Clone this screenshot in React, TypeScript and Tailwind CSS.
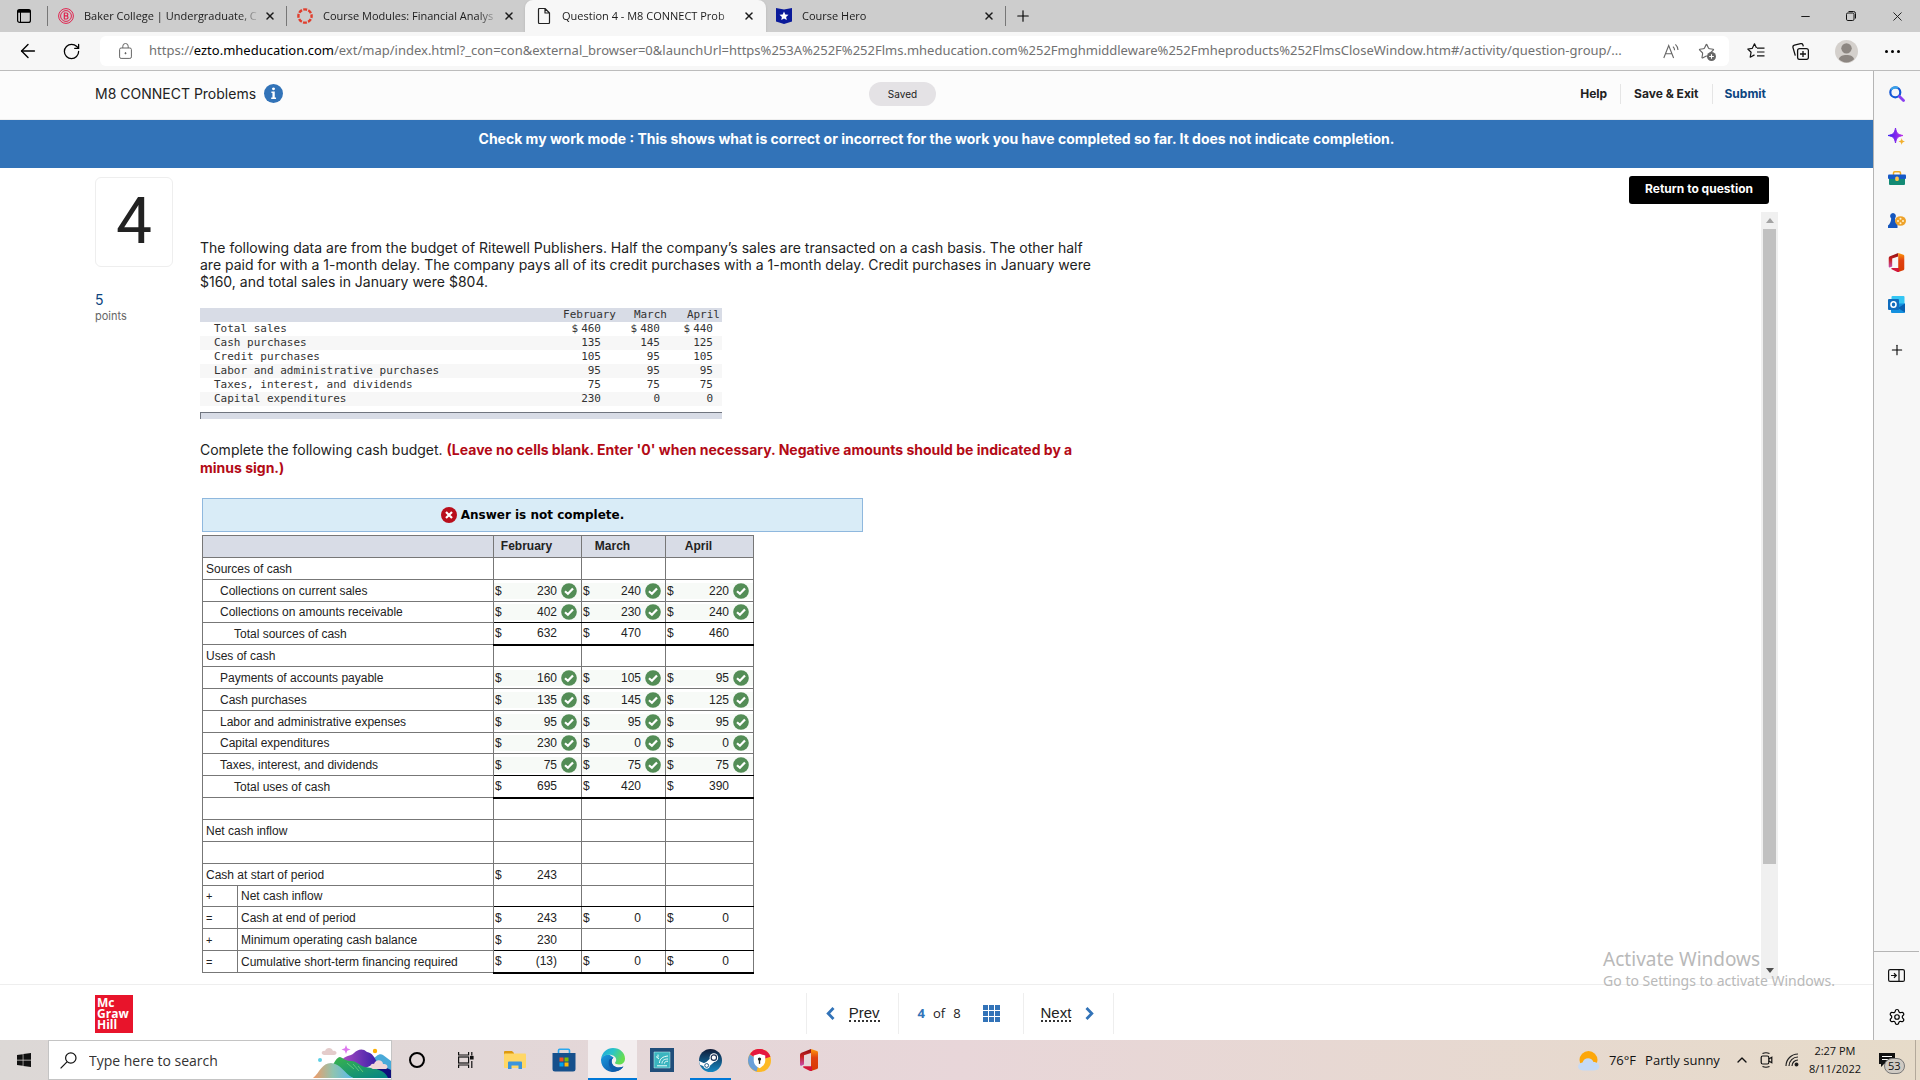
import type { ReactNode } from "react";
import { ArrowLeft, RotateCw, Settings, Star, X, Plus, Minus, ChevronUp } from "lucide-react";
import { FaWindows } from "react-icons/fa";

const tabs = [
  { title: "Baker College | Undergraduate, C", icon: <BakerIcon />, state: "idle" },
  { title: "Course Modules: Financial Analys", icon: <CanvasIcon />, state: "idle" },
  { title: "Question 4 - M8 CONNECT Prob", icon: <PageIcon />, state: "active" },
  { title: "Course Hero", icon: <HeroIcon />, state: "last" },
];

const budget = [
  ["Total sales", "460", "480", "440"],
  ["Cash purchases", "135", "145", "125"],
  ["Credit purchases", "105", "95", "105"],
  ["Labor and administrative purchases", "95", "95", "95"],
  ["Taxes, interest, and dividends", "75", "75", "75"],
  ["Capital expenditures", "230", "0", "0"],
];

type Row = {
  label: string;
  values?: string[];
  indent?: 1 | 2;
  op?: string;
  ok?: boolean;
  total?: boolean;
  tight?: boolean;
  subline?: boolean;
};

const rows: Row[] = [
  { label: "Sources of cash" },
  { label: "Collections on current sales", indent: 1, ok: true, values: ["230", "240", "220"] },
  { label: "Collections on amounts receivable", indent: 1, ok: true, tight: true, subline: true, values: ["402", "230", "240"] },
  { label: "Total sources of cash", indent: 2, total: true, values: ["632", "470", "460"] },
  { label: "Uses of cash" },
  { label: "Payments of accounts payable", indent: 1, ok: true, values: ["160", "105", "95"] },
  { label: "Cash purchases", indent: 1, ok: true, values: ["135", "145", "125"] },
  { label: "Labor and administrative expenses", indent: 1, ok: true, values: ["95", "95", "95"] },
  { label: "Capital expenditures", indent: 1, ok: true, tight: true, values: ["230", "0", "0"] },
  { label: "Taxes, interest, and dividends", indent: 1, ok: true, subline: true, values: ["75", "75", "75"] },
  { label: "Total uses of cash", indent: 2, total: true, values: ["695", "420", "390"] },
  { label: "" },
  { label: "Net cash inflow" },
  { label: "" },
  { label: "Cash at start of period", values: ["243", "", ""] },
  { label: "Net cash inflow", op: "+", tight: true, subline: true },
  { label: "Cash at end of period", op: "=", values: ["243", "0", "0"] },
  { label: "Minimum operating cash balance", op: "+", subline: true, values: ["230", "", ""] },
  { label: "Cumulative short-term financing required", op: "=", total: true, values: ["(13)", "0", "0"] },
];

function BakerIcon() {
  return (
    <svg viewBox="0 0 16 16" className="size-4" fill="none" stroke="#e0224e">
      <circle cx="8" cy="8" r="7.4" strokeWidth="1" />
      <circle cx="8" cy="8" r="5.4" strokeWidth="1" />
      <path d="M6.3 4.8v6.4M6 5h2.4a1.4 1.4 0 0 1 0 2.9H6.5M8.5 8a1.5 1.5 0 0 1 0 3H6" strokeWidth="1.2" />
    </svg>
  );
}

function CanvasIcon() {
  return (
    <svg viewBox="0 0 16 16" className="size-4" fill="none" stroke="#e03e2d">
      <circle cx="8" cy="8" r="6.6" strokeWidth="2.4" strokeDasharray="3.9 1.28" strokeDashoffset="1.95" />
    </svg>
  );
}

function PageIcon() {
  return (
    <svg viewBox="0 0 16 16" className="size-4" fill="none" stroke="#222" strokeWidth="1.2" strokeLinejoin="round">
      <path d="M2.5 1.5a1 1 0 0 1 1-1H9l4.5 4.5v9.5a1 1 0 0 1-1 1h-9a1 1 0 0 1-1-1zM9 .5V5h4.5" />
    </svg>
  );
}

function HeroIcon() {
  return (
    <svg viewBox="0 0 16 16" className="size-4">
      <path d="M0 0l8 1.6L16 0v13.4L8 16l-8-2.6z" fill="#0a1a9a" />
      <path d="M8 3.6l1.3 2.9 3.2.3-2.4 2.1.7 3.1L8 10.4 5.2 12l.7-3.1-2.4-2.1 3.2-.3z" fill="#fff" />
    </svg>
  );
}

function OfficeIcon({ className }: { className: string }) {
  return (
    <svg viewBox="0 0 18 22" className={className}>
      <defs>
        <linearGradient id="officeRed" x1="0" y1="0" x2="0" y2="1">
          <stop offset="0" stopColor="#8c0f14" />
          <stop offset=".45" stopColor="#c9211f" />
          <stop offset="1" stopColor="#c64fb0" />
        </linearGradient>
        <linearGradient id="officeOrange" x1="0" y1="0" x2="0" y2="1">
          <stop offset="0" stopColor="#ff9a0a" />
          <stop offset=".4" stopColor="#e04010" />
          <stop offset="1" stopColor="#d83b01" />
        </linearGradient>
      </defs>
      <path d="M11 0L1.5 3.8C.6 4.2 0 5 0 6v9.5c0 1 1 1.6 1.900 1.100L4 15.5V6.3L11 4z" fill="url(#officeRed)" />
      <path d="M11 0l6 2c.7.3 1 .8 1 1.5v15c0 .7-.3 1.2-1 1.5l-6 2z" fill="url(#officeOrange)" />
      <path d="M3.5 17.3H12V22L10 21.9l-6-2.8c-1-.5-1.3-1.4-.5-1.8z" fill="#d3173a" />
    </svg>
  );
}

function CheckDot() {
  return (
    <svg viewBox="0 0 16 16" className="size-4 shrink-0" role="img" aria-label="Correct">
      <circle cx="8" cy="8" r="7.8" fill="#538d56" />
      <path d="M4 8.2l2.900 2.600L12 5.400" fill="none" stroke="#fff" strokeWidth="2.200" />
    </svg>
  );
}

function TabStrip() {
  return (
    <div className="flex h-8 items-stretch bg-[#cdcdcd] text-[11px] text-[#1b1b1b]">
      <button aria-label="Tab actions" className="flex w-[47px] items-center justify-center">
        <svg viewBox="0 0 14 14" className="size-[14px]" fill="none" stroke="#000">
          <rect x=".6" y=".6" width="12.8" height="12.8" rx="2" strokeWidth="1.2" />
          <path d="M.6 2.2h12.8" strokeWidth="3" />
          <path d="M3.5 3v10.5" strokeWidth="1" />
        </svg>
      </button>
      {tabs.map((t) => (
        <div key={t.title} className={t.state === "active" ? "flex w-[241px] items-center rounded-t-lg bg-[#f7f7f7] pr-[11px] pl-[11px] shadow-sm" : "flex w-[239px] items-center"}>
          {t.state === "idle" && <span className="h-5 w-px bg-[#777]" />}
          <button className={t.state === "active" ? "flex min-w-0 flex-1 items-center gap-[10px] text-left" : "flex min-w-0 flex-1 items-center gap-[10px] pl-[10px] text-left"}>
            <span className="shrink-0">{t.icon}</span>
            <span className="flex-1 overflow-hidden whitespace-nowrap mask-r-from-88%">{t.title}</span>
          </button>
          <button aria-label="Close tab" className={t.state === "active" ? "pl-1" : "pr-[10px] pl-1"}>
            <X className="size-3" strokeWidth={3} />
          </button>
        </div>
      ))}
      <div className="flex items-center">
        <span className="h-5 w-px bg-[#777]" />
        <button aria-label="New tab" className="px-2"><Plus className="size-[18px]" strokeWidth={1.5} color="#000" /></button>
      </div>
      <div className="ml-auto flex">
        <button aria-label="Minimize" className="flex w-[46px] items-center justify-center"><Minus className="size-[13px]" strokeWidth={2} /></button>
        <button aria-label="Restore" className="flex w-[46px] items-center justify-center">
          <svg viewBox="0 0 10 10" className="size-[10px]" fill="none" stroke="#111">
            <rect x=".5" y="2" width="7.5" height="7.5" rx="1.3" />
            <path d="M2.5.5h5a2 2 0 0 1 2 2v5" />
          </svg>
        </button>
        <button aria-label="Close" className="flex w-[46px] items-center justify-center"><X className="size-[15px]" strokeWidth={1.5} /></button>
      </div>
    </div>
  );
}

function AddressBar() {
  return (
    <div className="flex h-[39px] items-center border-b border-[#bcbcbc] bg-[#f7f7f7] pr-1">
      <button aria-label="Back" className="flex w-14 justify-center"><ArrowLeft className="size-[22px]" strokeWidth={1.5} /></button>
      <button aria-label="Refresh" className="mr-[13px] flex w-[31px] justify-center"><RotateCw className="size-[19px]" strokeWidth={1.6} /></button>
      <div className="flex h-[30px] min-w-0 flex-1 items-center rounded-md bg-white pr-[14px] pl-4">
        <button aria-label="Site information" className="mr-[14px] flex w-[19px] justify-center">
          <svg viewBox="0 0 13 16" className="h-4 w-[13px]" fill="none" stroke="#666">
            <rect x=".6" y="5" width="11.8" height="10.4" rx="1.5" />
            <path d="M3.8 5V3.2a2.700 2.700 0 0 1 5.400 0V5" />
            <circle cx="6.5" cy="10.2" r=".6" fill="#444" />
          </svg>
        </button>
        <label className="relative min-w-0 flex-1 overflow-hidden text-[13px] whitespace-nowrap text-[#717171] font-['Noto_Sans',sans-serif]">
          https://<span className="text-black">ezto.mheducation.com</span>/ext/map/index.html?_con=con&amp;external_browser=0&amp;launchUrl=https%253A%252F%252Flms.mheducation.com%252Fmghmiddleware%252Fmheproducts%252FlmsCloseWindow.htm#/activity/question-group/...
          <input aria-label="Address" className="absolute inset-0 w-full bg-transparent outline-none" />
        </label>
        <button aria-label="Read aloud" className="mr-[18px]">
          <svg viewBox="0 0 17 17" className="size-[17px]" fill="none" stroke="#666" strokeWidth="1.1">
            <path d="M.8 15L5.7 2.5 10.6 15M2.4 10.8h6.6M10 3.6a5 5 0 0 1 1.6 3.6M12.4 1.3A8 8 0 0 1 15 7" />
          </svg>
        </button>
        <button aria-label="Add to favorites" className="relative">
          <Star className="size-[17px] text-[#666]" strokeWidth={1.6} />
          <svg viewBox="0 0 10 10" className="absolute -right-px -bottom-px size-[9px]">
            <circle cx="5" cy="5" r="5" fill="#666" />
            <path d="M5 2.4v5.2M2.4 5h5.2" stroke="#fff" strokeWidth="1.2" />
          </svg>
        </button>
      </div>
      <div className="flex pl-[5px]">
        <button aria-label="Favorites" className="flex w-11 items-center justify-center">
          <svg viewBox="0 0 18 16" className="h-4 w-[18px]" fill="none" stroke="#111" strokeWidth="1.2" strokeLinejoin="round">
            <path d="M9.5 5L7.5.8 5.3 5.3.8 6l3.3 3.2-.9 5 4.3-2.3M10 5.2h7.5M10 9h7.5M10 12.8h7.5" />
          </svg>
        </button>
        <button aria-label="Collections" className="flex w-[45px] items-center justify-center">
          <svg viewBox="0 0 17 17" className="size-[17px]" fill="none" stroke="#111" strokeWidth="1.3">
            <rect x="5.6" y="5.6" width="10.8" height="10.8" rx="2" />
            <path d="M11 8v6M8 11h6M3.3 12.6L1 4.6a2 2 0 0 1 1.4-2.4L8.6.7a2 2 0 0 1 2.4 1.4l.3 1.2" />
          </svg>
        </button>
        <button aria-label="Profile" className="flex w-[46px] items-center justify-center">
          <svg viewBox="0 0 22 22" className="size-[23px]">
            <circle cx="11" cy="11" r="11" fill="#d4d0cc" />
            <circle cx="11" cy="8" r="5" fill="#8c8681" />
            <path d="M3.8 18.5c0-5.5 14.4-5.5 14.4 0-3.5 4-11 4-14.4 0z" fill="#8c8681" />
          </svg>
        </button>
        <button aria-label="Settings and more" className="mr-px flex w-[46px] items-center justify-center gap-[3px]">
          <span className="size-[3px] rounded-full bg-black" />
          <span className="size-[3px] rounded-full bg-black" />
          <span className="size-[3px] rounded-full bg-black" />
        </button>
      </div>
    </div>
  );
}

function PageHeader() {
  return (
    <header className="flex h-[49px] items-center border-b border-[#eee] bg-[#fcfcfc] pr-[107px] pb-[3px] pl-[95px] font-[Inter,sans-serif] text-[#222]">
      <div className="flex flex-1 items-center gap-2">
        <h1 className="text-sm">M8 CONNECT Problems</h1>
        <button aria-label="Information">
          <svg viewBox="0 0 18 18" className="size-[19px]">
            <circle cx="9" cy="9" r="9" fill="#3273b8" />
            <path d="M9 3.2a1.4 1.4 0 1 0 .01 0zM7 7.2h3.2v5.600h1.200v1.400H6.800v-1.400H8V8.600H7z" fill="#fff" />
          </svg>
        </button>
      </div>
      <span className="mr-14 w-[67px] rounded-full bg-[#e4e2e5] text-center text-[10px] leading-6">Saved</span>
      <nav className="flex flex-1 items-center justify-end text-xs font-bold">
        <a href="#help" className="border-r border-[#e5e5e5] pr-[13px] leading-5">Help</a>
        <a href="#save" className="border-r border-[#e5e5e5] px-[13px] leading-5">Save &amp; Exit</a>
        <a href="#submit" className="pl-3 text-[#0c4580]">Submit</a>
      </nav>
    </header>
  );
}

function BudgetData() {
  return (
    <>
      <table className="mt-[18px] w-[522px] table-fixed font-['DejaVu_Sans_Mono',monospace] text-[11px] leading-[14px] text-[#333]">
        <colgroup>
          <col />
          <col className="w-[71px]" />
          <col className="w-[52px]" />
          <col className="w-[46px]" />
        </colgroup>
        <thead>
          <tr className="bg-[#d8dce6]">
            <th aria-label="Item" />
            <th className="pr-2 text-right font-normal">February</th>
            <th className="pr-[9px] text-right font-normal">March</th>
            <th className="pr-[2px] text-right font-normal">April</th>
          </tr>
        </thead>
        <tbody>
          {budget.map(([label, ...v], i) => (
            <tr key={label} className="even:bg-[#f7f7f7]">
              <td className="pl-[14px]">{label}</td>
              <td className="pr-[23px] text-right">{i === 0 && <span className="mr-[3px]">$</span>}{v[0]}</td>
              <td className="pr-4 text-right">{i === 0 && <span className="mr-[3px]">$</span>}{v[1]}</td>
              <td className="pr-[9px] text-right">{i === 0 && <span className="mr-[3px]">$</span>}{v[2]}</td>
            </tr>
          ))}
        </tbody>
      </table>
      <div className="mt-[6px] h-[7px] w-[522px] border-t border-l border-[#70757f] bg-[#d8dce6]" />
    </>
  );
}

function CashBudget() {
  return (
    <table className="mt-[3px] ml-[2px] w-[552px] table-fixed border-collapse text-xs leading-4 text-[#222] font-['Liberation_Sans',Arial,sans-serif]">
      <colgroup>
        <col className="w-[35px]" />
        <col />
        <col className="w-[88px]" />
        <col className="w-[84px]" />
        <col className="w-[88px]" />
      </colgroup>
      <thead>
        <tr className="h-[22px] bg-[#d8dce6]">
          <th colSpan={2} aria-label="Line item" className="border border-[#777]" />
          <th className="border border-[#777] pr-[22px] pb-px">February</th>
          <th className="border border-[#777] pr-[22px] pb-px">March</th>
          <th className="border border-[#777] pr-[22px] pb-px">April</th>
        </tr>
      </thead>
      <tbody>
        {rows.map((r, i) => (
          <tr key={i} className={r.tight ? "h-[21px]" : "h-[22px]"}>
            {r.op && <td className="border border-[#777] pl-[3px] text-[11px]">{r.op}</td>}
            <td
              colSpan={r.op ? 1 : 2}
              className={r.indent === 2 ? "border border-[#777] pl-[31px]" : r.indent === 1 ? "border border-[#777] pl-[17px]" : "border border-[#777] pl-[3px]"}
            >
              {r.label}
            </td>
            {[0, 1, 2].map((c) => (
              <td
                key={c}
                className={
                  r.total
                    ? "border-x border-b-2 border-x-[#777] border-b-black"
                    : r.subline
                      ? "border border-[#777] border-b-black"
                      : "border border-[#777]"
                }
              >
                {r.values?.[c] && (
                  <div className={r.ok ? "flex items-center gap-1 bg-[#f7faf7] pr-1 pl-px" : "flex items-center gap-1 pr-1 pl-px"}>
                    <span>$</span>
                    <span className="ml-auto">{r.values[c]}</span>
                    {r.ok ? <CheckDot /> : <span className="w-4" />}
                  </div>
                )}
              </td>
            ))}
          </tr>
        ))}
      </tbody>
    </table>
  );
}

function Scrollbar() {
  return (
    <div className="flex w-[17px] shrink-0 flex-col items-center bg-[#f0f0f0]">
      <button aria-label="Scroll up" className="flex h-[17px] items-center">
        <svg viewBox="0 0 8 5" className="h-[5px] w-2"><path d="M0 5l4-5 4 5z" fill="#a3a3a3" /></svg>
      </button>
      <div className="w-[13px] flex-[433] bg-[#c1c1c1]" />
      <div className="flex-[67]" />
      <button aria-label="Scroll down" className="flex h-[17px] items-center">
        <svg viewBox="0 0 8 5" className="h-[5px] w-2"><path d="M0 0l4 5 4-5z" fill="#505050" /></svg>
      </button>
    </div>
  );
}

function PageFooter() {
  return (
    <footer className="flex h-14 items-center border-t border-[#eee] bg-white pt-[2px] pr-12 pl-[95px] text-[#222] font-['Liberation_Sans',Arial,sans-serif]">
      <div className="flex-1">
        <div className="flex size-[38px] flex-col justify-center bg-[#e8142b] pl-[2px] text-xs leading-[11px] font-bold text-white font-['Open_Sans',sans-serif]">
          <span>Mc</span>
          <span>Graw</span>
          <span>Hill</span>
        </div>
      </div>
      <nav className="flex h-[41px] items-stretch border-x border-[#eee] text-[15px]">
        <a href="#prev" className="flex items-center gap-[14px] border-r border-[#eee] pr-[18px] pl-[19px]">
          <svg viewBox="0 0 9 13" className="h-[13px] w-[9px]"><path d="M7.5 1L2.2 6.5l5.3 5.5" fill="none" stroke="#3273b8" strokeWidth="2.8" /></svg>
          <span className="border-b-2 border-dotted border-[#333] leading-[15px]">Prev</span>
        </a>
        <div className="flex w-[124px] items-center gap-2 pl-[19px] text-[13px] font-['Open_Sans',sans-serif]">
          <b className="text-[#3273b8]">4</b>
          <span>of</span>
          <span>8</span>
          <button aria-label="Question list" className="ml-[14px]">
            <svg viewBox="0 0 17 17" className="size-[17px]" fill="#3273b8">
              {[0, 6, 12].map((x) => [0, 6, 12].map((y) => <rect key={`${x}-${y}`} x={x} y={y} width="5" height="5" />))}
            </svg>
          </button>
        </div>
        <a href="#next" className="flex items-center gap-[14px] border-l border-[#eee] pr-[19px] pl-[17px]">
          <span className="border-b-2 border-dotted border-[#333] leading-[15px]">Next</span>
          <svg viewBox="0 0 9 13" className="h-[13px] w-[9px]"><path d="M1.5 1l5.3 5.5L1.5 12" fill="none" stroke="#3273b8" strokeWidth="2.8" /></svg>
        </a>
      </nav>
      <div className="flex-1" />
    </footer>
  );
}

function SideBar() {
  const item = "flex h-[42px] items-center justify-center";
  return (
    <aside className="flex w-[47px] shrink-0 flex-col border-l border-[#b5b5b5] bg-[#f7f7f7] pt-[2px] pr-px">
      <button aria-label="Search" className={item}>
        <svg viewBox="0 0 16 16" className="size-4" fill="none" strokeLinecap="round">
          <circle cx="6.3" cy="6.3" r="5" stroke="#1458d6" strokeWidth="2.2" />
          <path d="M2.8 3A5 5 0 0 1 8 1.6" stroke="#38a3e8" strokeWidth="2.2" />
          <path d="M10.5 10.5l4 4" stroke="#8a3ff0" strokeWidth="2.8" />
        </svg>
      </button>
      <button aria-label="Discover" className={item}>
        <svg viewBox="0 0 17 17" className="size-[17px]">
          <defs>
            <linearGradient id="spark"><stop offset="0" stopColor="#3a20f0" /><stop offset="1" stopColor="#c02ee8" /></linearGradient>
          </defs>
          <path d="M7.5 0c1 5 2 6.5 7.5 7.5-5.5 1-6.5 2.5-7.5 7.5C6.5 10 5.5 8.500 0 7.500 5.500 6.500 6.500 5 7.500 0z" fill="url(#spark)" stroke="url(#spark)" />
          <path d="M13.7 10c.5 2.3 1 2.9 3.3 3.5-2.3.6-2.8 1.2-3.3 3.5-.5-2.3-1-2.9-3.3-3.5 2.3-.6 2.8-1.2 3.3-3.5z" fill="#f3b02d" />
        </svg>
      </button>
      <button aria-label="Tools" className={item}>
        <svg viewBox="0 0 18 14" className="h-[14px] w-[18px]">
          <path d="M5.500 4V2c0-.8.4-1.2 1.2-1.2h4.600c.8 0 1.200.4 1.200 1.200v2" fill="none" stroke="#eda91f" strokeWidth="1.5" />
          <rect x="1" y="6" width="16" height="8" rx="1" fill="#138a74" />
          <rect x="0" y="3.5" width="18" height="4.5" rx="1" fill="#1659c7" />
          <rect x="7.2" y="5.5" width="3.6" height="4.5" rx="1.5" fill="#ffc44d" />
        </svg>
      </button>
      <button aria-label="Games" className={item}>
        <svg viewBox="0 0 18 15" className="h-[15px] w-[18px]">
          <path d="M5 0a3 3 0 0 1 2.600 4.300L7 5.500c.2 2.500.8 4 2.500 6V15H0v-2.500C2 11 3 8.500 3.200 5.500l-.8-1.200A3 3 0 0 1 5 0z" fill="#1556bd" />
          <ellipse cx="12.5" cy="8" rx="5.5" ry="4.8" fill="#eea22a" />
          <g fill="#fff3cf"><circle cx="12.5" cy="5.7" r="1" /><circle cx="10" cy="8" r="1" /><circle cx="15" cy="8" r="1" /><circle cx="12.5" cy="10.3" r="1" /></g>
        </svg>
      </button>
      <button aria-label="Office" className={item}><OfficeIcon className="h-[19px] w-[17px]" /></button>
      <button aria-label="Outlook" className={item}>
        <svg viewBox="0 0 17 17" className="size-[17px]">
          <rect x="3.5" y="0" width="13" height="10" rx="1" fill="#34c6f4" />
          <path d="M3 7.5h14V16a1 1 0 0 1-1 1H4a1 1 0 0 1-1-1z" fill="#1490df" />
          <path d="M17 7.5L10 12l7 4.5z" fill="#0a5fb0" />
          <rect x="0" y="3" width="11" height="11" rx="1" fill="#0f6cbd" />
          <ellipse cx="5.5" cy="8.5" rx="2.5" ry="2.8" fill="none" stroke="#fff" strokeWidth="1.6" />
        </svg>
      </button>
      <button aria-label="Add" className="flex h-[50px] items-center justify-center"><Plus className="size-4" strokeWidth={1.6} /></button>
      <div className="mt-auto border-t border-[#b5b5b5] pt-[2px] pb-[2px]">
        <button aria-label="Hide sidebar" className="flex h-[42px] w-full items-center justify-center">
          <svg viewBox="0 0 17 13" className="h-[13px] w-[17px]" fill="none" stroke="#111" strokeWidth="1.2">
            <rect x=".6" y=".6" width="15.8" height="11.8" rx="1.5" />
            <path d="M11 .6v11.8M3 6.5h5M6 4.3l2.3 2.2L6 8.7" />
          </svg>
        </button>
        <button aria-label="Sidebar settings" className="flex h-[42px] w-full items-center justify-center"><Settings className="size-[18px]" strokeWidth={1.6} /></button>
      </div>
    </aside>
  );
}

function TaskItem({ label, children, tone }: { label: string; children: ReactNode; tone?: "open" | "active" }) {
  return (
    <button
      aria-label={label}
      className={
        tone === "active"
          ? "flex w-[49px] items-center justify-center border-b-2 border-[#0078d7] bg-[#f3eeef] pt-[2px]"
          : tone === "open"
            ? "mx-1 flex w-[41px] items-center justify-center border-b-2 border-[#0078d7] pt-[2px]"
            : "flex w-[49px] items-center justify-center"
      }
    >
      {children}
    </button>
  );
}

function Taskbar() {
  return (
    <div className="flex h-10 items-stretch bg-linear-to-r from-[#dcd8d6] via-[#e8d6d9] to-[#e6dbc9] text-[13px] text-[#111]">
      <button aria-label="Start" className="flex w-12 items-center justify-center"><FaWindows className="size-4" /></button>
      <label className="flex w-[344px] items-center border border-[#c4c4c4] bg-white">
        <svg viewBox="0 0 17 17" className="ml-[11px] size-[17px] shrink-0" fill="none" stroke="#111" strokeWidth="1.2">
          <circle cx="10.8" cy="6" r="5.2" />
          <path d="M7 9.8L.6 16.4" />
        </svg>
        <input aria-label="Search" placeholder="Type here to search" className="ml-3 w-[200px] pt-px text-sm outline-none placeholder:text-[#333]" />
        <svg viewBox="0 0 78 36" className="ml-auto h-9 w-[78px]">
          <defs>
            <linearGradient id="hillA" x1="0" y1="0" x2="1" y2="0"><stop offset="0" stopColor="#f29a66" /><stop offset=".5" stopColor="#8fc4b0" /><stop offset="1" stopColor="#59b9ea" /></linearGradient>
            <linearGradient id="hillB" x1="0" y1="0" x2="1" y2="1"><stop offset="0" stopColor="#3cb54a" /><stop offset="1" stopColor="#038387" /></linearGradient>
            <linearGradient id="hillC" x1="0" y1="0" x2="1" y2="0"><stop offset="0" stopColor="#b04fc4" /><stop offset="1" stopColor="#3a1fa8" /></linearGradient>
          </defs>
          <path d="M58 20c5-7 9-9 12-7l8 6v17H58z" fill="#49a9d8" />
          <path d="M64 27c6-3 10-1 14 1v8H64z" fill="#10107c" />
          <path d="M27 20c6-8 10-5 14-9s9-5 13-1c5 1 8 5 10 11l-14 6z" fill="url(#hillC)" />
          <path d="M18 27c3-7 6-12 9-12 3 1 6 4 10 4 6-1 10 5 15 6 10 1 20 3 23 11H40z" fill="url(#hillB)" />
          <path d="M34 21l7 6M40 22l6 7M45 24l5 6" stroke="#5cc77a" strokeWidth="1" />
          <path d="M0 36c7-6 9-15 18-15 10 1 13 10 22 15z" fill="url(#hillA)" />
          <path d="M11 13c-4-1-2-5 1-4 1-4 7-4 8 0 4-1 5 4 1 4z" fill="#e4cccb" />
          <path d="M60 27c-4-1-3-6 1-5 2-6 9-4 9 0 5-1 6 5 2 5z" fill="#f1d6d8" />
          <path d="M33 3l1.2 3.3L37.5 7.5l-3.3 1.2L33 12l-1.2-3.3L28.5 7.5l3.3-1.2z" fill="#dd77ee" />
          <circle cx="62" cy="9" r="2.2" fill="#ffb000" />
          <circle cx="7" cy="18" r="2" fill="#5fd0e6" />
        </svg>
      </label>
      <TaskItem label="Cortana"><span className="size-4 rounded-full border-2 border-black" /></TaskItem>
      <TaskItem label="Task view">
        <svg viewBox="0 0 16 16" className="size-4" fill="none" stroke="#111" strokeWidth="1.2">
          <path d="M.6 0v3h10V0M.6 16v-3h10v3M13.8 0v3.5M13.8 9v7" />
          <rect x=".6" y="5" width="10" height="6" />
          <rect x="12.6" y="4.5" width="2.4" height="2.4" fill="#111" />
        </svg>
      </TaskItem>
      <TaskItem label="File Explorer">
        <svg viewBox="0 0 22 18" className="h-[18px] w-[22px]">
          <path d="M0 1a1 1 0 0 1 1-1h7l2 2v3H0z" fill="#dd9a10" />
          <rect x="0" y="2.5" width="22" height="14.5" rx="1" fill="#ffd766" />
          <path d="M4 18v-6.5a1 1 0 0 1 1-1h12a1 1 0 0 1 1 1V18h-3.5v-3.5h-7V18z" fill="#3a94dd" />
        </svg>
      </TaskItem>
      <TaskItem label="Microsoft Store">
        <svg viewBox="0 0 24 24" className="size-6">
          <path d="M6.5 6V2.5c0-.8.4-1.2 1.2-1.2h8.600c.8 0 1.200.4 1.200 1.200V6" fill="none" stroke="#29a8ef" strokeWidth="1.6" />
          <path d="M.5 5h23v16a2.5 2.5 0 0 1-2.5 2.5H3A2.5 2.5 0 0 1 .5 21z" fill="#16508c" />
          <path d="M7.5 9.500h4v4h-4z" fill="#f25022" /><path d="M12.5 9.500h4v4h-4z" fill="#7fba00" />
          <path d="M7.5 14.500h4v4h-4z" fill="#00a4ef" /><path d="M12.5 14.500h4v4h-4z" fill="#ffb900" />
        </svg>
      </TaskItem>
      <TaskItem label="Microsoft Edge" tone="active">
        <svg viewBox="0 0 24 24" className="size-6">
          <defs>
            <linearGradient id="edgeTop" x1="0" y1="0" x2="1" y2=".4"><stop offset="0" stopColor="#1fa5de" /><stop offset=".5" stopColor="#2bc4c8" /><stop offset="1" stopColor="#66dd50" /></linearGradient>
            <linearGradient id="edgeBody" x1="0" y1="0" x2="1" y2="1"><stop offset="0" stopColor="#1b9be0" /><stop offset="1" stopColor="#0b4a9c" /></linearGradient>
          </defs>
          <path d="M0 12a12 12 0 0 0 16.500 11.100c2.500-1 4.500-2.600 5.900-4.700-4 2.200-10.400 1.200-11.600-3.600-.6-2.400.4-4.300 1.700-5.300L8 6.500C3 6.500 0 9.500 0 12z" fill="url(#edgeBody)" />
          <path d="M8.300 11.500c-1.800 5 .8 9.800 5.200 11.300 4 .4 7-1.500 8.900-4.400-4 2.200-10.400 1.200-11.600-3.600-.6-2.400.4-4.300 1.700-5.300z" fill="#0c5bab" />
          <path d="M.1 10.800C1 4.500 6 0 12 0c7 0 12 5 12 10.500 0 4-2.800 6-6 6-2.500 0-4-.8-4-1.500s1.200-1.200 1.200-3.200c0-2.800-3-5-7-5-4.200 0-7 1.700-8.100 4z" fill="url(#edgeTop)" />
        </svg>
      </TaskItem>
      <TaskItem label="Paint app">
        <svg viewBox="0 0 24 24" className="size-6">
          <path d="M0 0h24v24H0z" fill="#204e7a" />
          <path d="M4 4h16v16H4z" fill="#3ab4bf" stroke="#c9f1f2" strokeWidth=".5" />
          <path d="M9.500 15c0-4 3-6.500 8.500-7M12 15.500c0-3 2-4.500 6-4.500M14.500 15.500c0-1.500 1-2.300 3.500-2.300M6 8.500l3 2.500M8 6.500v3M7 17.800h10" stroke="#eefcfc" fill="none" />
        </svg>
      </TaskItem>
      <TaskItem label="Steam" tone="open">
        <svg viewBox="0 0 24 24" className="size-[23px]">
          <defs>
            <linearGradient id="steam" x1="0" y1="0" x2="0" y2="1"><stop offset="0" stopColor="#101c38" /><stop offset="1" stopColor="#1487c2" /></linearGradient>
          </defs>
          <circle cx="12" cy="12" r="12" fill="url(#steam)" />
          <path d="M0 12.500l6 2.500 5-4.500L16.500 13 9 19.500 1 16.500z" fill="#fff" />
          <circle cx="15.5" cy="9" r="4.5" fill="#fff" /><circle cx="15.5" cy="9" r="2.8" fill="none" stroke="#1c3154" strokeWidth="1.2" />
          <circle cx="8" cy="17.2" r="3.3" fill="#fff" /><circle cx="8" cy="17.2" r="2" fill="none" stroke="#175583" />
        </svg>
      </TaskItem>
      <TaskItem label="Secure Browser">
        <svg viewBox="0 0 24 24" className="size-[23px]">
          <circle cx="12" cy="12" r="12" fill="#fdb924" />
          <path d="M12 12L2 5.4A12 12 0 0 1 23.400 8z" fill="#e5163f" />
          <path d="M12 12L1.800 5.700A12 12 0 0 0 9 23.600z" fill="#6a9fd8" />
          <path d="M12 5l6 1.800V12c0 4-2.800 6.500-6 8-3.200-1.500-6-4-6-8V6.800z" fill="#fff" />
          <circle cx="12" cy="10.5" r="1.7" fill="#222" /><path d="M11.300 11h1.400v4.500h-1.400z" fill="#222" />
        </svg>
      </TaskItem>
      <TaskItem label="Office"><OfficeIcon className="h-[22px] w-[18px]" /></TaskItem>

      <div className="ml-auto flex items-center">
        <button className="mr-[14px] flex items-center gap-[9px] pt-px">
          <svg viewBox="0 0 22 20" className="h-5 w-[22px]">
            <circle cx="10.5" cy="9" r="9" fill="#fca70a" />
            <path d="M5 19.5c-6.500 0-6.500-7.500-.5-8C6 5.800 14 6 15.500 11c7 0 8 8.500.5 8.500z" fill="#c5daf6" />
          </svg>
          <span>76°F</span>
          <span>Partly sunny</span>
        </button>
        <button aria-label="Show hidden icons" className="mr-[10px]"><ChevronUp className="size-4" strokeWidth={2} /></button>
        <button aria-label="Meet now" className="mr-3">
          <svg viewBox="0 0 13 16" className="h-4 w-[13px]" fill="none" stroke="#111" strokeWidth="1.2">
            <rect x="1.2" y="4" width="7.6" height="8" rx="1.5" />
            <path d="M8.800 7l3-1.800v5.600l-3-1.800M2.500 1.500Q6 0 9.500 1.500M2.500 14.500Q6 16 9.500 14.500" />
          </svg>
        </button>
        <button aria-label="Network" className="mr-[10px]">
          <svg viewBox="0 0 14 14" className="size-[14px]" fill="none" stroke="#222" strokeWidth="1.2">
            <path d="M1 13A12 12 0 0 1 13 1M4 13a9 9 0 0 1 9-9M7 13a6 6 0 0 1 6-6" />
            <circle cx="11.5" cy="11.5" r="1.4" fill="#111" />
          </svg>
        </button>
        <button className="mr-[18px] text-center text-[11px] leading-[18px]">
          <span className="block">2:27 PM</span>
          <span className="block">8/11/2022</span>
        </button>
        <button aria-label="Notifications" className="relative mr-[10px] w-[26px]">
          <svg viewBox="0 0 16 16" className="size-4">
            <path d="M0 1h16v11H5l-3 3v-3H0z" fill="#111" />
            <path d="M3 4.5h10M3 7.5h10" stroke="#fff" />
          </svg>
          <span className="absolute top-[6px] left-[5px] rounded-full border border-[#777] bg-[#cfcac3] px-[3px] text-[11px] leading-[14px]">53</span>
        </button>
        <span className="mr-1 h-10 w-px bg-[#b3a99b]" />
      </div>
    </div>
  );
}

export default function App() {
  return (
    <div className="flex min-h-screen flex-col bg-white font-['Open_Sans',sans-serif]">
      <TabStrip />
      <AddressBar />
      <div className="flex flex-1">
        <div className="relative flex min-w-0 flex-1 flex-col">
          <PageHeader />
          <div className="h-12 bg-[#3273b8] pt-[9px] text-center text-sm font-bold text-white font-[Inter,sans-serif]">
            Check my work mode : This shows what is correct or incorrect for the work you have completed so far. It does not indicate completion.
          </div>
          <main className="flex flex-1 pt-2 pb-[5px] pl-[95px] font-[Inter,sans-serif] text-[#222]">
            <div className="w-[105px] shrink-0 pt-px">
              <div className="flex h-[90px] w-[78px] items-center justify-center rounded-md border border-[#eee] text-[64px] font-[Roboto,sans-serif]">4</div>
              <p className="mt-[23px] text-sm text-[#0c4580]">5</p>
              <p className="text-[11px] leading-3 text-[#666]">points</p>
            </div>
            <div className="flex min-w-0 flex-1 flex-col">
              <button className="mr-[104px] h-7 self-end rounded-[3px] bg-black px-4 pb-[2px] text-xs font-bold text-white">Return to question</button>
              <div className="mt-2 flex flex-1 pr-[95px]">
                <div className="flex-1 pt-[27px] text-sm leading-[17px]">
                  <p className="max-w-[892px]">
                    The following data are from the budget of Ritewell Publishers. Half the company’s sales are transacted on a cash basis. The other half are paid for with a 1-month delay. The company pays all of its credit purchases with a 1-month delay. Credit purchases in January were $160, and total sales in January were $804.
                  </p>
                  <BudgetData />
                  <p className="mt-[22px] max-w-[892px] leading-[18px]">
                    Complete the following cash budget.{" "}
                    <b className="text-[#b30a16]">(Leave no cells blank. Enter '0' when necessary. Negative amounts should be indicated by a minus sign.)</b>
                  </p>
                  <div className="mt-[21px] ml-[2px] flex h-[34px] max-w-[661px] items-center justify-center gap-1 border border-[#8fb8de] bg-[#d9ecf7] text-xs font-bold text-black font-['DejaVu_Sans',Verdana,sans-serif]">
                    <svg viewBox="0 0 16 16" className="size-4">
                      <circle cx="8" cy="8" r="8" fill="#b90e1c" />
                      <path d="M5 5l6 6M11 5l-6 6" stroke="#fff" strokeWidth="2.2" />
                    </svg>
                    Answer is not complete.
                  </div>
                  <CashBudget />
                </div>
                <Scrollbar />
              </div>
            </div>
          </main>
          <PageFooter />
          <div className="pointer-events-none absolute right-[38px] bottom-[49px] text-[#b9b9b9] font-['Noto_Sans',sans-serif]">
            <p className="text-[19px] leading-6">Activate Windows</p>
            <p className="text-sm leading-5">Go to Settings to activate Windows.</p>
          </div>
        </div>
        <SideBar />
      </div>
      <Taskbar />
    </div>
  );
}
